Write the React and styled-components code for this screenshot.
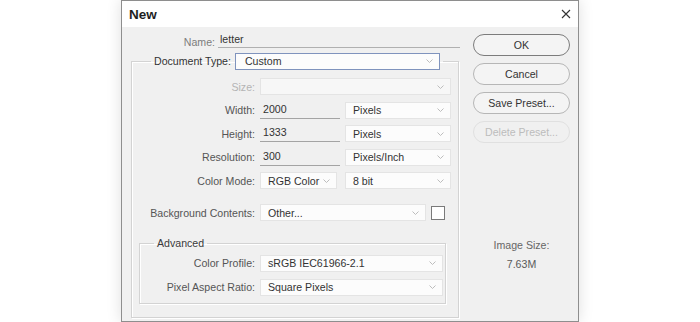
import React from "react";
import styled, { createGlobalStyle } from "styled-components";

const GlobalStyle = createGlobalStyle`
  html, body {
    margin: 0;
    padding: 0;
    background: #ffffff;
  }
  body {
    font-family: "Liberation Sans", Arial, sans-serif;
    font-size: 10.6px;
    color: #333;
  }
  * {
    box-sizing: border-box;
  }
`;

const Page = styled.div`
  width: 700px;
  height: 322px;
  padding-left: 121px;
  overflow: hidden;
  background: #fff;
`;

const Dialog = styled.div`
  width: 458px;
  height: 322px;
  display: flex;
  flex-direction: column;
  background: #f0f0f0;
  border: 1px solid #8e8e8e;
  box-shadow: 0 0 14px rgba(0, 0, 0, 0.13);
`;

const TitleBar = styled.div`
  height: 26px;
  flex: none;
  background: #fff;
  display: flex;
  align-items: center;
  justify-content: space-between;
  padding: 0 7px 0 7px;
`;

const Title = styled.div`
  font-size: 13.5px;
  font-weight: bold;
  color: #1e1e1e;
`;

const Body = styled.div`
  flex: 1;
  display: flex;
`;

const FormColumn = styled.div`
  width: 343px;
  display: flex;
  flex-direction: column;
`;

const NameRow = styled.div`
  display: flex;
  align-items: flex-end;
  height: 16px;
  margin-top: 5px;
`;

const Label = styled.div`
  width: ${(p) => (p.w ? `${p.w}px` : "auto")};
  margin-right: ${(p) => (p.gap == null ? 5 : p.gap)}px;
  text-align: right;
  white-space: nowrap;
  color: ${(p) =>
    p.disabled ? "#b4b4b4" : p.dim ? "#7c7c7c" : p.strong ? "#333" : "#555"};
`;

const NameField = styled.div`
  width: 242px;
  height: 16px;
  line-height: 14px;
  padding-left: 2px;
  border-bottom: 1px solid #b0b0b0;
  color: #333;
`;

const Group = styled.fieldset`
  margin: ${(p) => p.m};
  padding: ${(p) => p.pad};
  width: ${(p) => (p.w ? `${p.w}px` : "auto")};
  border: 1px solid #d3d3d3;
  box-shadow: inset 1px 1px 0 #fff, 1px 1px 0 #fff;
  min-width: 0;
  display: flex;
  flex-direction: column;
  gap: ${(p) => p.gap}px;
`;

const Legend = styled.legend`
  margin-left: ${(p) => p.offset}px;
  padding: 0 3px;
  display: flex;
  align-items: center;
  height: ${(p) => p.h}px;
  color: #3a3a3a;
`;

const Row = styled.div`
  display: flex;
  align-items: center;
  height: 17px;
  margin-top: ${(p) => p.top || 0}px;
`;

const SelectBox = styled.div`
  width: ${(p) => p.w}px;
  height: 17px;
  margin-left: ${(p) => p.ml || 0}px;
  flex: none;
  display: flex;
  align-items: center;
  justify-content: space-between;
  padding: 0 6px 0 ${(p) => p.pl || 7}px;
  background: ${(p) => (p.disabled ? "#f7f7f7" : "#fcfcfc")};
  border: 1px solid ${(p) => (p.focused ? "#7f93bd" : "#e4e4e4")};
  color: #333;
  white-space: nowrap;
`;

const TextField = styled.div`
  width: ${(p) => p.w}px;
  height: 17px;
  line-height: 15px;
  padding-left: 3px;
  border-bottom: 1px solid #a4a4a4;
  color: #333;
`;

const Swatch = styled.div`
  width: 14px;
  height: 14px;
  margin-left: 5px;
  background: #fff;
  border: 1px solid #7a7a7a;
`;

const SideColumn = styled.div`
  flex: 1;
  display: flex;
  flex-direction: column;
  padding: 7px 0 0 8px;
`;

const Button = styled.div`
  width: 97px;
  height: 22px;
  margin-bottom: 7px;
  border-radius: 11px;
  display: flex;
  align-items: center;
  justify-content: center;
  background: ${(p) => (p.disabled ? "#f0f0f0" : "#f4f4f4")};
  border: 1px solid
    ${(p) => (p.primary ? "#7c7c7c" : p.disabled ? "#e0e0e0" : "#b6b6b6")};
  color: ${(p) => (p.disabled ? "#bcbcbc" : "#333")};
`;

const ImageSize = styled.div`
  width: 97px;
  margin-top: 88px;
  text-align: center;
  line-height: 14px;
  color: #666;
`;

const SizeValue = styled.div`
  margin-top: 5px;
  color: #5a5a5a;
`;

function Chevron() {
  return (
    <svg width="7" height="4" viewBox="0 0 7 4">
      <path d="M0.5 0.5 L3.5 3.5 L6.5 0.5" fill="none" stroke="#bdbdbd" strokeWidth="1" />
    </svg>
  );
}

function CloseIcon() {
  return (
    <svg width="10" height="10" viewBox="0 0 10 10">
      <path d="M1 1 L9 9 M9 1 L1 9" stroke="#333" strokeWidth="1.1" />
    </svg>
  );
}

function Select({ children, ...rest }) {
  return (
    <SelectBox {...rest}>
      <span>{children}</span>
      <Chevron />
    </SelectBox>
  );
}

export default function App() {
  return (
    <Page>
      <GlobalStyle />
      <Dialog>
        <TitleBar>
          <Title>New</Title>
          <CloseIcon />
        </TitleBar>
        <Body>
          <FormColumn>
            <NameRow>
              <Label w={93} gap={3} dim>
                Name:
              </Label>
              <NameField>letter</NameField>
            </NameRow>

            <Group m="4px 0 0 9px" pad="8px 6px 13px 0" gap={6.5} w={328}>
              <Legend offset={19} h={18}>
                <Label as="span" gap={4} strong>
                  Document Type:
                </Label>
                <Select w={205} pl={9} focused>
                  Custom
                </Select>
              </Legend>

              <Row>
                <Label w={123} disabled>
                  Size:
                </Label>
                <Select w={191} disabled />
              </Row>
              <Row>
                <Label w={123}>Width:</Label>
                <TextField w={80}>2000</TextField>
                <Select w={106} ml={5}>
                  Pixels
                </Select>
              </Row>
              <Row>
                <Label w={123}>Height:</Label>
                <TextField w={80}>1333</TextField>
                <Select w={106} ml={5}>
                  Pixels
                </Select>
              </Row>
              <Row>
                <Label w={123}>Resolution:</Label>
                <TextField w={80}>300</TextField>
                <Select w={106} ml={5}>
                  Pixels/Inch
                </Select>
              </Row>
              <Row>
                <Label w={123}>Color Mode:</Label>
                <Select w={77}>RGB Color</Select>
                <Select w={106} ml={8}>
                  8 bit
                </Select>
              </Row>
              <Row top={8.5}>
                <Label w={123}>Background Contents:</Label>
                <Select w={166}>Other...</Select>
                <Swatch />
              </Row>

              <Group m="9px 6px 0 7px" pad="5px 0 7px 0" gap={7}>
                <Legend offset={14} h={13}>
                  Advanced
                </Legend>
                <Row>
                  <Label w={115}>Color Profile:</Label>
                  <Select w={183}>sRGB IEC61966-2.1</Select>
                </Row>
                <Row>
                  <Label w={115}>Pixel Aspect Ratio:</Label>
                  <Select w={183}>Square Pixels</Select>
                </Row>
              </Group>
            </Group>
          </FormColumn>

          <SideColumn>
            <Button primary>OK</Button>
            <Button>Cancel</Button>
            <Button>Save Preset...</Button>
            <Button disabled>Delete Preset...</Button>
            <ImageSize>
              Image Size:
              <SizeValue>7.63M</SizeValue>
            </ImageSize>
          </SideColumn>
        </Body>
      </Dialog>
    </Page>
  );
}
